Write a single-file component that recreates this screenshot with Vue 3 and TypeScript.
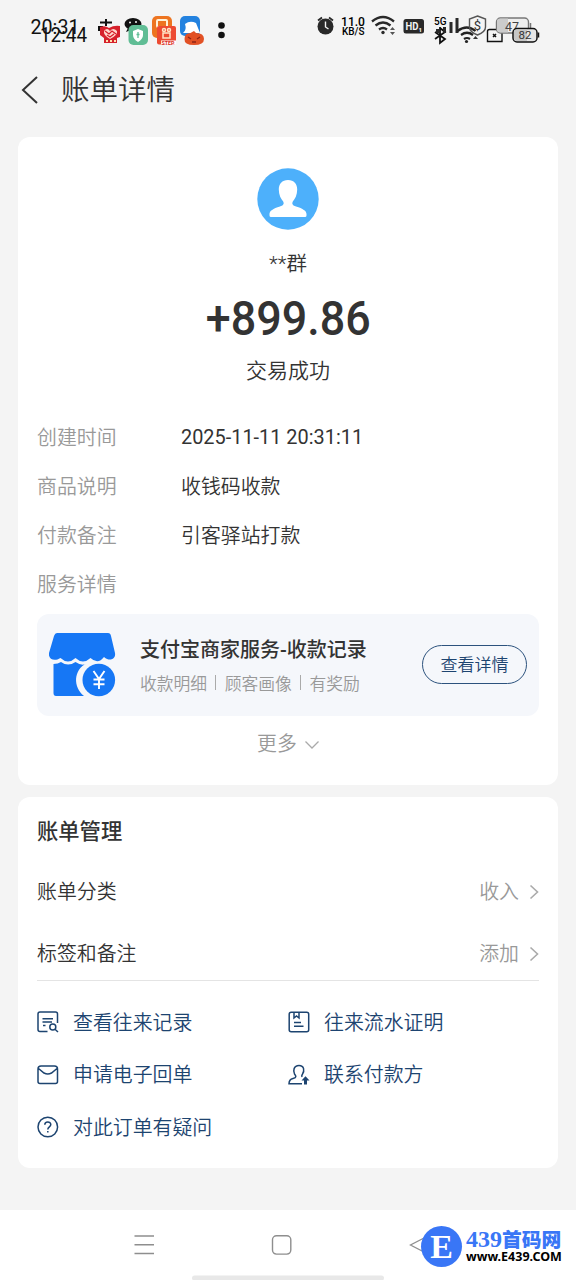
<script setup lang="ts">
interface Detail {
  label: string
  value: string
}
interface Setting {
  label: string
  value: string
}
interface Action {
  icon: 'records' | 'statement' | 'receipt' | 'contact' | 'help'
  label: string
}

const details: Detail[] = [
  { label: '创建时间', value: '2025-11-11 20:31:11' },
  { label: '商品说明', value: '收钱码收款' },
  { label: '付款备注', value: '引客驿站打款' },
  { label: '服务详情', value: '' },
]
const settings: Setting[] = [
  { label: '账单分类', value: '收入' },
  { label: '标签和备注', value: '添加' },
]
const actions: Action[] = [
  { icon: 'records', label: '查看往来记录' },
  { icon: 'statement', label: '往来流水证明' },
  { icon: 'receipt', label: '申请电子回单' },
  { icon: 'contact', label: '联系付款方' },
  { icon: 'help', label: '对此订单有疑问' },
]
</script>

<template>
  <div class="screen">
    <svg class="status" viewBox="0 0 576 56" width="576" height="56">
      <!-- clocks -->
      <text x="30.500" y="33.500" font-size="20.500" textLength="49" lengthAdjust="spacingAndGlyphs" class="clock">20:31</text>
      <text x="40" y="41.800" font-size="19.500" textLength="47" lengthAdjust="spacingAndGlyphs" class="clock">12:44</text>
      <!-- app badges -->
      <g stroke="#111" stroke-width="2" fill="none">
        <path d="M100 22.500h12M106 19v7M99 31v-4h4" />
      </g>
      <path d="M100 27q5-2 9 1q5-3 11-2v11l-3 1v5h-13v-5l-4-3z" fill="#d6202b" />
      <path d="M104 31q3-4 6 0q3-4 7 0q1 4-7 8q-7-4-6-8" fill="#ffd6cc" />
      <path d="M105 31l4 3 3-3 4 3M107 35l3 2 4-3" stroke="#d6202b" stroke-width="1.200" fill="none" />
      <path d="M106 41h2M110 41h2M114 41h2" stroke="#ffe0b0" stroke-width="2" />
      <ellipse cx="133" cy="24" rx="8.500" ry="6" fill="#111" />
      <path d="M128 28l-2 4 5-2z" fill="#111" />
      <circle cx="130" cy="22.500" r="1" fill="#f4f4f4" />
      <circle cx="136" cy="22" r="1" fill="#f4f4f4" />
      <rect x="128.500" y="25" width="19.500" height="20" rx="5" fill="#60bd95" />
      <path d="M138 29l5 2v4q0 4-5 7q-5-3-5-7v-4z" fill="#fff" />
      <path d="M138 32v6M136.500 34.500h3" stroke="#60bd95" stroke-width="1.300" />
      <rect x="152" y="16" width="20" height="22" rx="5" fill="#ed7420" />
      <rect x="157" y="20" width="10" height="7" rx="1" fill="none" stroke="#fff2d8" stroke-width="2" />
      <rect x="157" y="26" width="19" height="18.500" rx="2" fill="#ed4b32" />
      <g stroke="#ffe6c8" stroke-width="1.500" fill="none">
        <circle cx="164" cy="30" r="1.500" /><circle cx="169" cy="30" r="1.500" />
        <rect x="163" y="33" width="7" height="5" />
      </g>
      <path d="M161 40.500h15v4h-15z" fill="#fff" />
      <text x="161.500" y="44.500" font-size="5" font-weight="bold" fill="#d92b20" textLength="13" lengthAdjust="spacingAndGlyphs">STEP</text>
      <rect x="180" y="16" width="20" height="20" rx="5" fill="#2382df" />
      <path d="M185 24q5-4 11-1l4 10h-17q4-3 2-9" fill="#fff" />
      <path d="M184.500 39q0-6 6-6l3.500-2 2 2q8 0 8 6q0 6-10 6t-9.500-6" fill="#e25125" />
      <path d="M188 37l3 2M200 37l-3 2M192 42h4" stroke="#8e2416" stroke-width="1.300" />
      <circle cx="221.500" cy="25.500" r="3.300" fill="#111" />
      <circle cx="221.500" cy="35" r="3.300" fill="#111" />
      <!-- alarm -->
      <circle cx="325.500" cy="26.500" r="8" fill="#292929" />
      <path d="M325.500 21.500v5.500l3 2" stroke="#f4f4f4" stroke-width="1.400" fill="none" />
      <path d="M318 20.500l4-3M333 20.500l-4-3" stroke="#292929" stroke-width="1.800" />
      <text x="341" y="25.700" font-size="12.500" textLength="24" lengthAdjust="spacingAndGlyphs" font-weight="500">11.0</text>
      <text x="342" y="35" font-size="10" textLength="22.500" lengthAdjust="spacingAndGlyphs" font-weight="500">KB/S</text>
      <!-- network indicators -->
      <g fill="none" stroke="#292929" stroke-width="2.300">
        <path d="M372 21.500q11-9 22 0M375.500 25.500q7.500-6 15 0M379 29.500q4-3 8 0" />
      </g>
      <circle cx="383" cy="32.500" r="1.700" fill="#292929" />
      <path d="M390 30l2.500-3 2.500 3zM390 32l2.500 3 2.500-3z" fill="#555" />
      <rect x="403.500" y="19" width="20.500" height="14.500" rx="2.500" fill="#292929" />
      <text x="405.500" y="30.300" font-size="10.500" textLength="16.500" lengthAdjust="spacingAndGlyphs" font-weight="bold" class="inverse">HD₁</text>
      <text x="434" y="24.500" font-size="11" textLength="12.500" lengthAdjust="spacingAndGlyphs" font-weight="500">5G</text>
      <path d="M440 27v16l5-4-10-7M435 39l10-7-5-4" fill="none" stroke="#111" stroke-width="1.800" />
      <path d="M437.500 33v-4M444.500 33v-6M451 33v-11M457 33v-15" stroke="#292929" stroke-width="3" />
      <g fill="none" stroke="#222" stroke-width="2.200">
        <path d="M457.500 31q9.500-7 18 0M461 35q6-4.500 12 0M464 39q3-2 6 0" />
      </g>
      <circle cx="466.500" cy="41.500" r="1.600" fill="#222" />
      <path d="M473 39l2.500-3 2.500 3" fill="#333" />
      <path d="M477.500 16l8 3v8q0 5-8 8q-8-3-8-8v-8z" fill="none" stroke="#555" stroke-width="1.400" />
      <text x="473.800" y="30" font-size="13" fill="#333">$</text>
      <path d="M489.500 29.500h9.500l3 3v9h-14.500v-10q0-2 2-2z" fill="none" stroke="#111" stroke-width="1.400" />
      <path d="M493 34l3 3M496 34l-3 3" stroke="#111" stroke-width="1.500" />
      <rect x="496.500" y="18" width="32" height="15" rx="4" fill="#eee" stroke="#777" stroke-width="1.400" />
      <path d="M500 18.500h8v14h-8q-3 0-3-3v-8q0-3 3-3" fill="#ccc" />
      <path d="M530.500 23v5" stroke="#777" stroke-width="1.500" />
      <text x="505" y="30.500" font-size="13.500" fill="#444" textLength="14" lengthAdjust="spacingAndGlyphs">47</text>
      <rect x="513" y="28.500" width="24" height="13.500" rx="4" fill="#e6e6e6" stroke="#111" stroke-width="1.500" />
      <path d="M517 29.500h10v11.500h-10q-3 0-3-3v-5.500q0-3 3-3" fill="#c6c6c6" />
      <path d="M538.500 32.500v5" stroke="#111" stroke-width="1.500" />
      <text x="518.500" y="39.300" font-size="11.500" fill="#333" textLength="13" lengthAdjust="spacingAndGlyphs">82</text>
    </svg>

    <header class="header">
      <svg class="back" width="18" height="30" viewBox="0 0 18 30">
        <path d="M16 2L2 15L16 28" fill="none" stroke="#333" stroke-width="2" />
      </svg>
      <h1>账单详情</h1>
    </header>

    <main class="content">
      <section class="card bill">
        <svg class="avatar" width="62" height="62" viewBox="0 0 62 62">
          <circle cx="31" cy="31" r="30.700" fill="#4db0fb" />
          <path d="M31 12C25 12 21.800 16 21.800 21.500C21.800 27 24 31 26.200 33.500C27.500 36 26 37.500 23 38.500C16 40.500 12.500 43 12.500 46V47.500Q12.500 49 14 49H48Q49.500 49 49.500 47.500V46C49.500 43 46 40.500 39 38.500C36 37.500 34.500 36 35.800 33.500C38 31 40.200 27 40.200 21.500C40.200 16 37 12 31 12Z" fill="#fff" />
        </svg>
        <div class="payer">**群</div>
        <div class="amount">+899.86</div>
        <div class="result">交易成功</div>

        <dl class="details">
          <div v-for="item in details" :key="item.label" class="detail">
            <dt>{{ item.label }}</dt>
            <dd>{{ item.value }}</dd>
          </div>
        </dl>

        <div class="service">
          <svg class="shop" width="68" height="66" viewBox="0 0 68 66">
            <path d="M8 1H59Q61.500 1 62 4L66 21C67 27 61 30 55 25Q49 33 41.500 26Q34 33 26.500 26Q19 33 11.500 26C5 30-1 27 0 21L5 4Q6 1 8 1Z" fill="#1677f5" />
            <path d="M4.500 32Q9 32 12 30Q19 35 26.500 30Q34 35 38 31C24 38 24 55 35 64H7Q4.500 64 4.500 61Z" fill="#1677f5" />
            <circle cx="49.800" cy="48" r="16.300" fill="#1677f5" />
            <path d="M44.500 39l5.500 8 5.500-8M50 47v10M44.500 47.500h11M44.500 52.300h11" fill="none" stroke="#fff" stroke-width="1.900" />
          </svg>
          <div class="service-text">
            <strong>支付宝商家服务-收款记录</strong>
            <div class="tags"><span>收款明细</span><i></i><span>顾客画像</span><i></i><span>有奖励</span></div>
          </div>
          <button class="view" type="button">查看详情</button>
        </div>

        <div class="more">
          更多
          <svg width="16" height="10" viewBox="0 0 16 10">
            <path d="M1.500 1.500L8 8L14.500 1.500" fill="none" stroke="#aaa" stroke-width="1.300" />
          </svg>
        </div>
      </section>

      <section class="card manage">
        <h2>账单管理</h2>
        <div class="settings">
          <div v-for="item in settings" :key="item.label" class="setting">
            <span>{{ item.label }}</span>
            <span class="setting-value">{{ item.value }}</span>
            <svg width="10" height="16" viewBox="0 0 10 16">
              <path d="M1.500 1.500L8.500 8L1.500 14.500" fill="none" stroke="#aaa" stroke-width="1.600" />
            </svg>
          </div>
        </div>
        <div class="actions">
          <div v-for="action in actions" :key="action.icon" class="action">
            <svg width="22" height="22" viewBox="0 0 22 22" fill="none" stroke="#1d4470" stroke-width="1.500">
              <template v-if="action.icon === 'records'">
                <path d="M10.500 20.500H3Q1 20.500 1 18.500V3Q1 1 3 1H18.500Q20.500 1 20.500 3V12M5.500 7.700h10.500M5.500 11h9.500M6 14.500h2.500" />
                <circle cx="15.800" cy="16" r="3" />
                <path d="M18 18.300l3 2.700" />
              </template>
              <template v-else-if="action.icon === 'statement'">
                <rect x="1.200" y="1.200" width="19.500" height="19.500" rx="2" />
                <path d="M6 1v6l2.500-2L11 7V1M6 11.500h7M6 15.200h9.500" />
              </template>
              <template v-else-if="action.icon === 'receipt'">
                <path d="M1 6V17.500Q1 19.500 3 19.500H18.500Q20.500 19.500 20.500 17.500V6M1 7V5Q1 2 4 2H17.500Q20.500 2 20.500 5V7M1.500 4.500L7 9Q10.800 11 14.500 9L20 4.500" />
              </template>
              <template v-else-if="action.icon === 'contact'">
                <path d="M14 19.800H1Q1 15.500 5 14.500C9 13.500 8 12 6.500 10C5 7 5.500 1.500 11 1.500C16.500 1.500 16.500 7 14.500 10C13.800 11 13.500 12 14 13" />
                <path d="M17.500 12.200l4 4.300h-2.500v4h-3v-4h-2.500z" fill="#1d4470" stroke="none" />
              </template>
              <template v-else>
                <circle cx="10.800" cy="11" r="9.800" />
                <path d="M7.800 8.800C7.800 5 13.800 5 13.800 8.600C13.800 11 10.800 10.800 10.800 13.500M10.800 15v1.600" />
              </template>
            </svg>
            <span>{{ action.label }}</span>
          </div>
        </div>
      </section>
    </main>

    <nav class="nav">
      <svg width="576" height="70" viewBox="0 0 576 70">
        <path d="M134.500 26h19.500M134.500 34.700h19.500M134.500 43.400h19.500" stroke="#8e8e8e" stroke-width="1.500" />
        <rect x="272.500" y="25.800" width="18.300" height="18.300" rx="4" fill="none" stroke="#8e8e8e" stroke-width="1.400" />
        <path d="M425 27.500L410.500 35L425 42.500" fill="none" stroke="#8e8e8e" stroke-width="1.300" />
        <rect x="192" y="65.500" width="192" height="5" rx="2.500" fill="#e8e8e8" />
      </svg>
    </nav>

    <div class="watermark">
      <span class="mark">E</span>
      <div class="site">
        <b><span class="number">439</span>首码网</b>
        <span class="url">www.E439.COM</span>
      </div>
    </div>
  </div>
</template>

<style>
body {
  margin: 0;
  background: #f4f4f4;
}
</style>

<style scoped>
.screen {
  position: relative;
  display: flex;
  flex-direction: column;
  width: 576px;
  height: 1280px;
  overflow: hidden;
  background: #f4f4f4;
  color: #333;
  font-family: Roboto, "Noto Sans CJK SC", sans-serif;
  font-size: 19.900px;
  font-weight: 350;
}
.screen * {
  box-sizing: border-box;
}
.status {
  display: block;
  flex: none;
  font-weight: 400;
}
.status text {
  font-family: Roboto, sans-serif;
}
.status .clock {
  fill: #111;
}
.status .inverse {
  fill: #f4f4f4;
}
.header {
  display: flex;
  align-items: center;
  flex: none;
  height: 67px;
  padding-left: 21px;
  gap: 22px;
}
h1,
h2 {
  margin: 0;
}
h1 {
  padding-top: 3px;
  font-size: 28.500px;
  font-weight: 350;
  line-height: 40px;
}
.content {
  display: flex;
  flex-direction: column;
  gap: 12px;
  flex: none;
  height: 1087px;
  padding: 14px 18px 0;
}
.card {
  width: 540px;
  border-radius: 12px;
  background: #fff;
}
.bill {
  display: flex;
  flex-direction: column;
  align-items: center;
  height: 648px;
  padding: 31px 19px 0;
}
.payer {
  height: 30px;
  margin-top: 19px;
  line-height: 30px;
  font-size: 20.500px;
}
.amount {
  height: 60px;
  margin-top: 10px;
  line-height: 60px;
  font-size: 48px;
  font-weight: 500;
  transform: scaleX(0.935);
}
.result {
  height: 30px;
  margin-top: 7px;
  line-height: 30px;
  font-size: 21px;
}
.details {
  width: 100%;
  margin: 26px 0 0;
}
.detail {
  display: grid;
  grid-template-columns: 144px 1fr;
  align-items: center;
  height: 49px;
}
.details dt {
  color: #999;
}
.details dd {
  margin: 0;
  color: #333;
}
.detail:first-child dd {
  padding-top: 1px;
  font-weight: 400;
}
.service {
  display: flex;
  align-items: center;
  flex: none;
  width: 502px;
  height: 102px;
  margin-top: 6px;
  padding: 0 12px;
  border-radius: 12px;
  background: #f5f7fb;
}
.service-text {
  flex: 1;
  padding-left: 23px;
}
.service-text strong {
  display: block;
  font-size: 20px;
  line-height: 32px;
  font-weight: 500;
  white-space: nowrap;
}
.tags {
  display: flex;
  align-items: center;
  height: 28px;
  margin-top: 3px;
  color: #999;
  font-size: 16.800px;
}
.tags i {
  width: 1px;
  height: 15px;
  margin: 0 8.300px;
  background: #aaa;
}
.view {
  width: 105px;
  height: 39px;
  margin-bottom: 2px;
  padding: 0 0 2px;
  border: 1px solid #2c527d;
  border-radius: 20px;
  background: transparent;
  color: #1d4470;
  font: inherit;
  font-size: 17px;
}
.more {
  display: flex;
  align-items: center;
  gap: 7px;
  height: 30px;
  margin-top: 11px;
  padding-left: 1px;
  color: #999;
}
.more svg {
  margin-top: 5px;
}
.manage {
  height: 371px;
  padding: 18px 19px 0;
}
h2 {
  height: 34px;
  line-height: 34px;
  font-size: 21.300px;
  font-weight: 500;
}
.settings {
  height: 122px;
  margin-top: 10px;
  border-bottom: 1px solid #e4e4e4;
}
.setting {
  display: flex;
  align-items: center;
  height: 62px;
}
.setting svg {
  margin-top: 3px;
}
.setting-value {
  margin-left: auto;
  padding-right: 10px;
  color: #999;
}
.actions {
  display: grid;
  grid-template-columns: 251px 251px;
  grid-auto-rows: 52.500px;
  padding-top: 14px;
  color: #1d4470;
}
.action {
  display: flex;
  align-items: center;
  gap: 14px;
}
.action svg {
  margin-top: 2px;
}
.nav {
  flex: none;
  height: 70px;
  background: #fff;
}
.nav svg {
  display: block;
}
.watermark {
  position: absolute;
  right: 11px;
  bottom: 12px;
  display: flex;
  align-items: center;
  gap: 4px;
  height: 44px;
}
.mark {
  width: 41px;
  height: 41px;
  border-radius: 50%;
  background: #3976f6;
  color: #fff;
  font: bold 34px/41px "Liberation Serif", serif;
  text-align: center;
}
.site {
  width: 99px;
  color: #3976f6;
}
.site b {
  display: block;
  height: 22px;
  line-height: 22px;
  font-size: 19.800px;
  font-weight: 900;
  white-space: nowrap;
}
.number {
  font-family: "Liberation Serif", serif;
  font-size: 24px;
}
.url {
  display: block;
  height: 14px;
  color: #000;
  font: bold 12.500px/14px "Noto Sans", sans-serif;
  white-space: nowrap;
}
</style>
